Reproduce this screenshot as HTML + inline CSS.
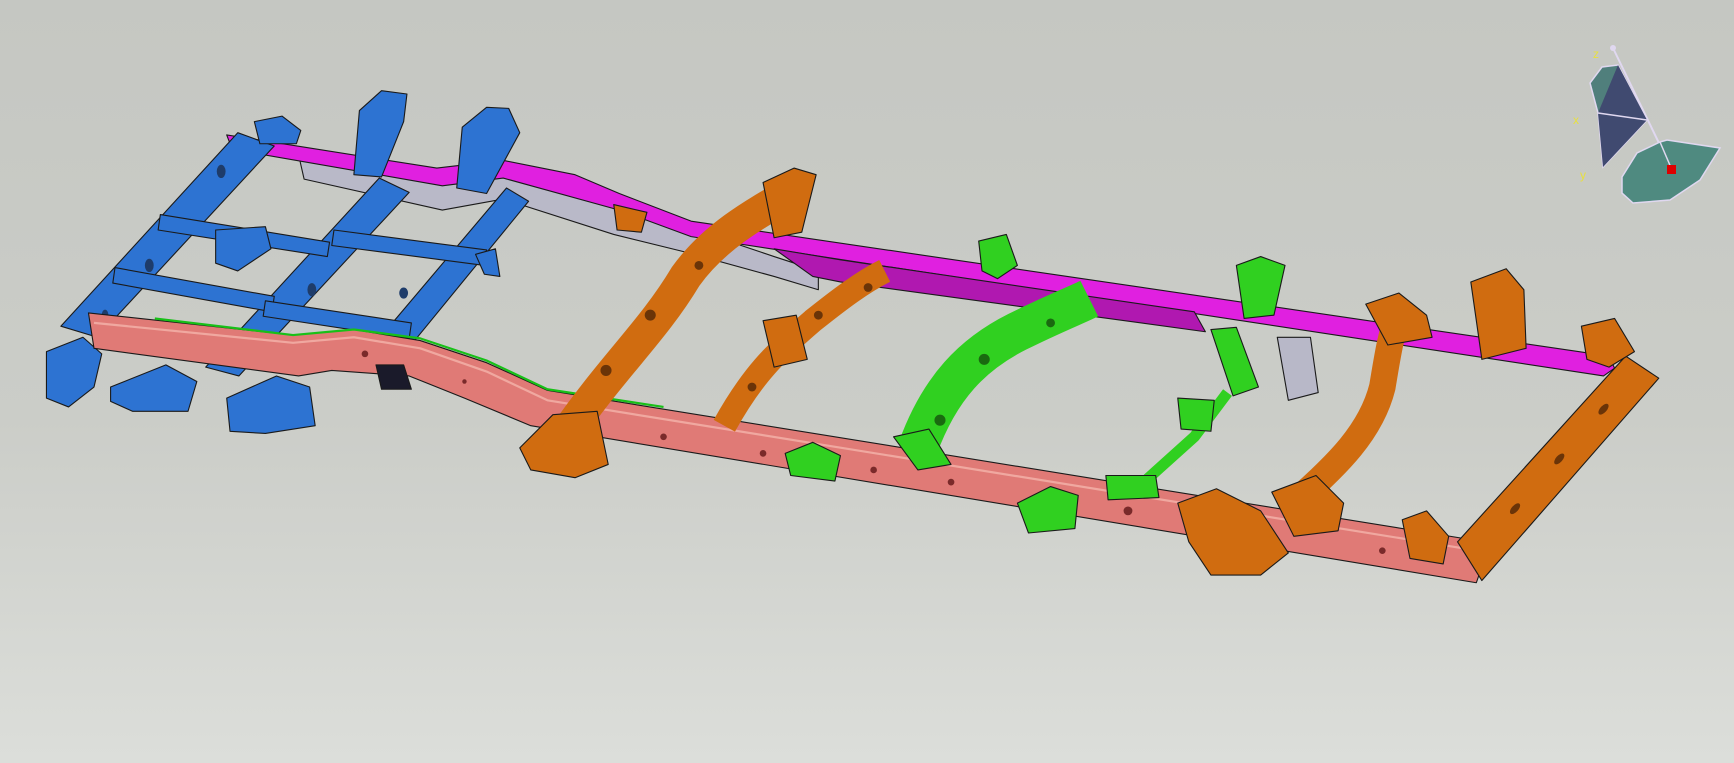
<!DOCTYPE html>
<html><head><meta charset="utf-8"><style>
html,body{margin:0;padding:0;width:1734px;height:763px;overflow:hidden}
body{background:linear-gradient(#c5c7c2 0%,#cbcdc8 55%,#dcdeda 100%);position:relative;font-family:"Liberation Sans",sans-serif}
svg{position:absolute;left:0;top:0}
</style></head><body>
<svg width="1734" height="763" viewBox="0 0 1568 690" preserveAspectRatio="none">
<g stroke="#1a1a1a" stroke-width="1" stroke-linejoin="round">
<polygon fill="#b9b9c8" points="270,140 400,165 455,156 560,185 700,232 740,245 740,262 700,250 620,228 555,212 455,180 400,190 275,162"/>
<polygon fill="#e020e0" points="205,122 395,152 455,145 520,158 560,175 625,200 1455,322 1460,333 1450,340 625,214 560,190 455,161 400,168 210,135"/>
<polygon fill="#b018b0" points="700,225 760,235 1080,282 1090,300 760,255 735,250"/>
<g fill="#2d73d2">
<polygon points="55,295 215,120 248,132 88,305"/>
<polygon points="186,332 343,161 370,174 216,340"/>
<polygon points="321,332 458,170 478,182 352,336"/>
<polygon points="145,194 298,219 296,232 143,208"/>
<polygon points="104,242 248,268 246,282 102,256"/>
<polygon points="302,208 440,226 438,240 300,222"/>
<polygon points="240,272 372,292 370,306 238,286"/>
<polygon points="195,208 240,205 245,225 215,245 195,238"/>
<polygon points="325,100 345,82 368,85 365,110 345,160 320,158"/>
<polygon points="418,115 440,97 460,98 470,120 440,175 413,170"/>
<polygon points="42,318 75,305 92,320 85,350 62,368 42,360"/>
<polygon points="100,350 150,330 178,345 170,372 120,372 100,363"/>
<polygon points="205,360 250,340 280,350 285,385 240,392 208,390"/>
<polygon points="230,110 255,105 272,118 268,130 235,130"/>
<polygon points="430,230 448,225 452,250 438,248"/>
</g>
<g fill="#1e3c6a" stroke="none">
<ellipse cx="200" cy="155" rx="4" ry="6"/><ellipse cx="135" cy="240" rx="4" ry="6"/><ellipse cx="95" cy="285" rx="3" ry="5"/>
<ellipse cx="282" cy="262" rx="4" ry="6"/><ellipse cx="236" cy="312" rx="4" ry="6"/><ellipse cx="365" cy="265" rx="4" ry="5"/>
</g>
<polygon fill="#e07a76" points="80,283 265,303 320,298 380,308 440,328 495,353 1330,488 1345,498 1335,527 480,385 420,360 370,340 300,335 270,340 85,315"/>
<polyline fill="none" stroke="#f0a8a0" stroke-width="2" points="85,292 265,310 320,305 380,315 440,336 495,362 1330,497"/>
<polyline fill="none" stroke="#18c018" stroke-width="2" points="140,288 265,303 320,298 380,306 440,326 495,352 600,368"/>
<polygon fill="#1a1a2a" points="340,330 365,330 372,352 345,352"/>
<g fill="#7a2a2a" stroke="none">
<circle cx="600" cy="395" r="3"/><circle cx="690" cy="410" r="3"/><circle cx="790" cy="425" r="3"/><circle cx="860" cy="436" r="3"/><circle cx="1020" cy="462" r="4"/><circle cx="1250" cy="498" r="3"/><circle cx="330" cy="320" r="3"/><circle cx="420" cy="345" r="2"/>
</g>
<path fill="none" stroke="#d06c10" stroke-width="30" stroke-linejoin="round" d="M510,395 C555,330 590,300 620,250 C645,215 680,195 715,175"/>
<polygon fill="#d06c10" points="470,405 500,375 540,372 550,420 520,432 480,425"/>
<polygon fill="#d06c10" points="690,165 718,152 738,158 725,210 700,215"/>
<polygon fill="#d06c10" points="555,185 585,192 580,210 558,208"/>
<path fill="none" stroke="#d06c10" stroke-width="22" stroke-linejoin="round" d="M655,385 C680,340 700,320 735,290 C760,270 780,255 800,245"/>
<polygon fill="#d06c10" points="690,290 720,285 730,325 700,332"/>
<g fill="#6a3408" stroke="none"><circle cx="548" cy="335" r="5"/><circle cx="588" cy="285" r="5"/><circle cx="632" cy="240" r="4"/><circle cx="680" cy="350" r="4"/><circle cx="740" cy="285" r="4"/><circle cx="785" cy="260" r="4"/></g>
<path fill="none" stroke="#30d020" stroke-width="36" stroke-linejoin="round" d="M830,405 C850,350 880,320 920,300 C950,285 975,275 985,270"/>
<g fill="#1a6a10" stroke="none"><circle cx="850" cy="380" r="5"/><circle cx="890" cy="325" r="5"/><circle cx="950" cy="292" r="4"/></g>
<polygon fill="#30d020" points="808,395 840,388 860,420 830,425"/>
<polygon fill="#30d020" points="885,218 910,212 920,240 902,252 888,245"/>
<polygon fill="#30d020" points="1118,240 1140,232 1162,240 1152,285 1125,288"/>
<polygon fill="#30d020" points="1095,298 1118,296 1138,350 1115,358"/>
<path fill="none" stroke="#30d020" stroke-width="10" d="M1030,440 L1080,395 L1110,355"/>
<polygon fill="#30d020" points="1065,360 1098,362 1095,390 1068,388"/>
<polygon fill="#30d020" points="1000,430 1045,430 1048,450 1002,452"/>
<polygon fill="#30d020" points="920,455 950,440 975,448 972,478 930,482"/>
<polygon fill="#30d020" points="710,410 735,400 760,412 755,435 715,430"/>
<polygon fill="#b8b8c8" points="1155,305 1185,305 1192,355 1165,362"/>
<path fill="none" stroke="#d06c10" stroke-width="24" stroke-linejoin="round" d="M1170,455 C1210,420 1240,390 1250,350 C1255,320 1258,300 1265,285"/>
<polygon fill="#d06c10" points="1065,455 1100,442 1140,462 1165,500 1140,520 1095,520 1075,490"/>
<polygon fill="#d06c10" points="1150,445 1190,430 1215,455 1210,480 1170,485"/>
<polygon fill="#d06c10" points="1235,275 1265,265 1290,285 1295,305 1255,312"/>
<polygon fill="#d06c10" points="1268,470 1290,462 1310,485 1305,510 1275,505"/>
<polygon fill="#d06c10" points="1318,490 1470,322 1500,342 1340,525"/>
<g fill="#6a3408" stroke="none"><ellipse cx="1370" cy="460" rx="6" ry="3" transform="rotate(-48 1370 460)"/><ellipse cx="1410" cy="415" rx="6" ry="3" transform="rotate(-48 1410 415)"/><ellipse cx="1450" cy="370" rx="6" ry="3" transform="rotate(-48 1450 370)"/></g>
<polygon fill="#d06c10" points="1430,295 1460,288 1478,318 1455,332 1435,325"/>
<polygon fill="#d06c10" points="1330,255 1362,243 1378,262 1380,315 1340,325"/>
</g>
</svg>
<svg width="1734" height="763" viewBox="0 0 1734 763">
<line x1="1613" y1="48" x2="1672" y2="170" stroke="#e0d8f0" stroke-width="2"/>
<circle cx="1613" cy="48" r="3" fill="#e0d8f0"/>
<polygon points="1603,167 1598,113 1590,83 1602,67 1618,65 1647,120" fill="#507f7c" stroke="#e0d8f0" stroke-width="1.5"/>
<polygon points="1603,167 1598,113 1618,65 1647,120" fill="#404a70"/>
<line x1="1598" y1="113" x2="1647" y2="120" stroke="#e0d8f0" stroke-width="1.5"/>
<polygon points="1622,177 1637,153 1660,142 1667,140 1720,148 1700,180 1670,200 1633,203 1622,193" fill="#4f8a80" stroke="#e0d8f0" stroke-width="1.5"/>
<line x1="1660" y1="142" x2="1672" y2="170" stroke="#e0d8f0" stroke-width="1.5"/>
<rect x="1667" y="165" width="9" height="9" fill="#d00"/>
<text x="1593" y="58" fill="#e8e040" font-size="12" font-family="Liberation Sans, sans-serif">z</text>
<text x="1573" y="124" fill="#e8e040" font-size="12" font-family="Liberation Sans, sans-serif">x</text>
<text x="1580" y="179" fill="#e8e040" font-size="12" font-family="Liberation Sans, sans-serif">y</text>
</svg>
</body></html>
